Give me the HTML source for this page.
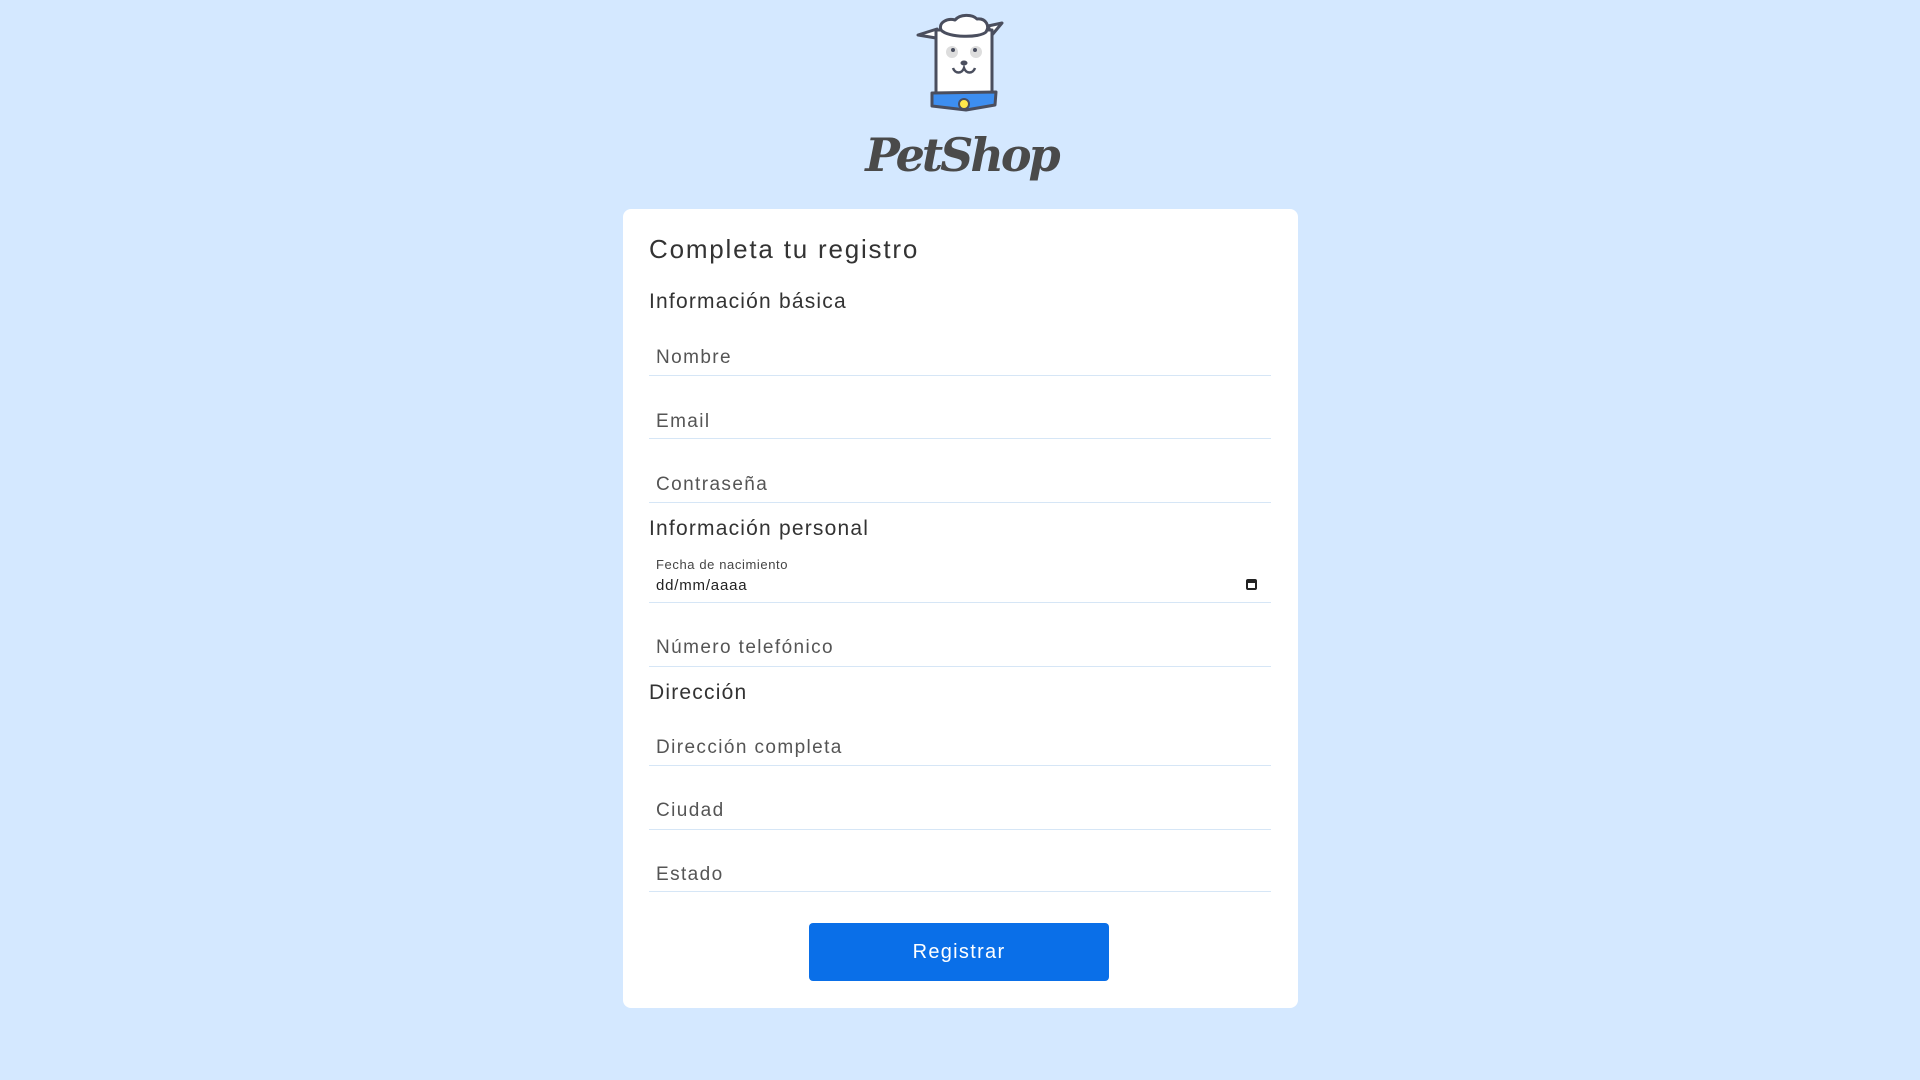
<!DOCTYPE html>
<html><head><meta charset="utf-8"><style>
body{margin:0;width:1920px;height:1080px;background:#d4e8ff;font-family:"Liberation Sans",sans-serif;position:relative;overflow:hidden}
.card{position:absolute;left:623px;top:209px;width:675px;height:799px;background:#fff;border-radius:8px}
.a{position:absolute;color:#444;white-space:nowrap}
.t{font-size:26px;color:#333;letter-spacing:1.8px}
.h{font-size:21px;color:#333;letter-spacing:1.2px}
.p{font-size:19px;color:#555;letter-spacing:1.4px}
.line{position:absolute;left:26px;width:622px;height:1px;background:#d6e6f6}
.btn{position:absolute;left:186px;top:714px;width:300px;height:58px;background:#0a6fe8;border-radius:4px;color:#fff;font-size:20px;text-align:center;line-height:58px;letter-spacing:1.3px}
.logo{position:absolute;left:856px;top:128px;width:211px;text-align:center;font-family:"DejaVu Serif",serif;font-style:italic;font-weight:bold;font-size:46px;color:#4a4a4a;letter-spacing:-3px}
</style></head><body>
<svg style="position:absolute;left:0;top:0" width="1920" height="130" viewBox="0 0 1920 130">
<g stroke="#4a4e5e" stroke-width="3" stroke-linejoin="round" fill="#fff">
<path d="M936 38 L918 35 L937 29 Z"/>
<path d="M992 35 L1002 23 L988 26 Z"/>
<rect x="936" y="30" width="56" height="66"/>
<path d="M941 30 C938 22 948 18 955 20 C960 14 972 14 977 19 C986 18 990 26 986 32 C980 38 948 38 941 30 Z"/>
<path d="M932 93 L996 92 L995 105 L966 110 L932 106 Z" fill="#3d8ef0"/>
<circle cx="964" cy="104" r="5" fill="#ffe84a" stroke-width="2"/>
</g>
<circle cx="952" cy="52" r="6" fill="#ddd"/><circle cx="976" cy="52" r="6" fill="#ddd"/>
<circle cx="953" cy="50" r="2" fill="#4a4e5e"/><circle cx="975" cy="50" r="2" fill="#4a4e5e"/>
<ellipse cx="964" cy="63" rx="3.5" ry="2.5" fill="#4a4e5e"/>
<path d="M953 68 C955 74 962 74 964 68 C966 74 973 74 975 68" fill="none" stroke="#4a4e5e" stroke-width="2.5"/>
</svg>
<div class="logo">PetShop</div>
<div class="card">
<div class="a t" style="left:26px;top:25px">Completa tu registro</div>
<div class="a h" style="left:26px;top:81px">Información básica</div>
<div class="a p" style="left:33px;top:138px">Nombre</div><div class="line" style="top:166px"></div>
<div class="a p" style="left:33px;top:202px">Email</div><div class="line" style="top:229px"></div>
<div class="a p" style="left:33px;top:265px">Contraseña</div><div class="line" style="top:293px"></div>
<div class="a h" style="left:26px;top:308px">Información personal</div>
<div class="a" style="left:33px;top:348px;font-size:13px;letter-spacing:0.6px">Fecha de nacimiento</div>
<div class="a" style="left:33px;top:368px;font-size:15px;color:#222;letter-spacing:0.8px">dd/mm/aaaa</div>
<div class="a" style="left:623px;top:370px;width:11px;height:11px;border:2px solid #222;border-top-width:4px;border-radius:2px;box-sizing:border-box"></div>
<div class="line" style="top:393px"></div>
<div class="a p" style="left:33px;top:428px">Número telefónico</div><div class="line" style="top:457px"></div>
<div class="a h" style="left:26px;top:472px">Dirección</div>
<div class="a p" style="left:33px;top:528px">Dirección completa</div><div class="line" style="top:556px"></div>
<div class="a p" style="left:33px;top:591px">Ciudad</div><div class="line" style="top:620px"></div>
<div class="a p" style="left:33px;top:655px">Estado</div><div class="line" style="top:682px"></div>
<div class="btn">Registrar</div>
</div>
</body></html>
